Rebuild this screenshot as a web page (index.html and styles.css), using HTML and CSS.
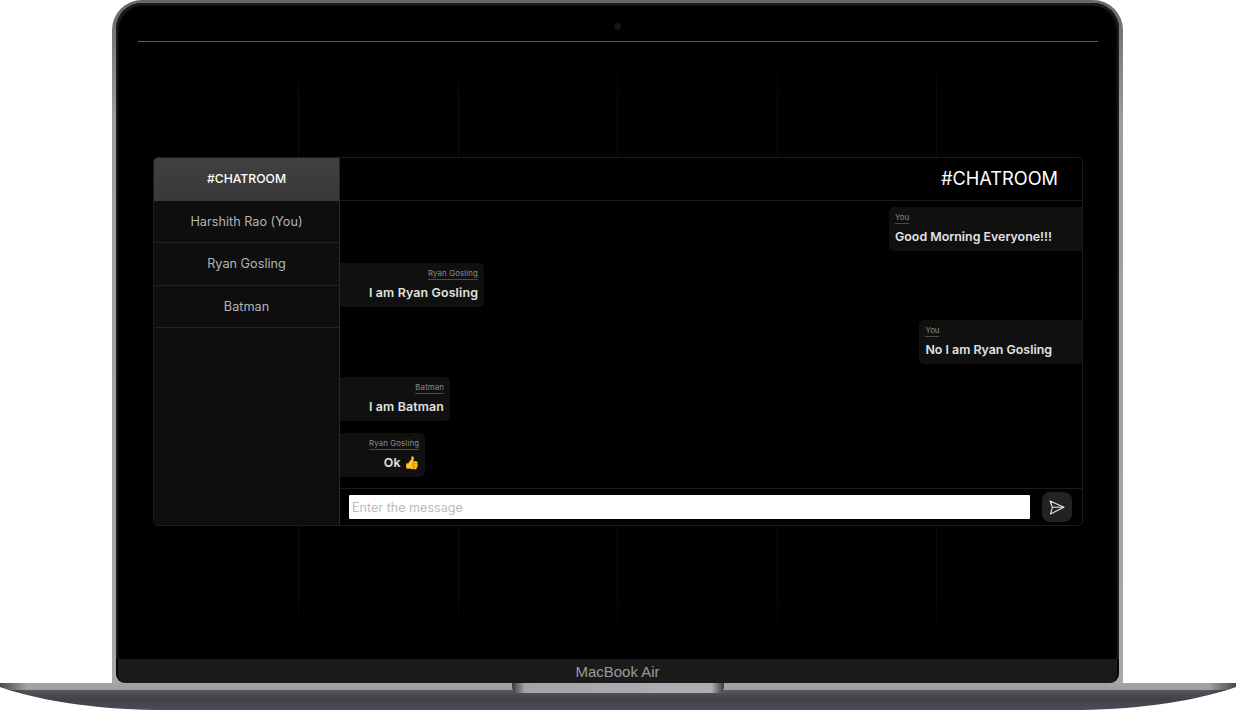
FILE: index.html
```html
<!DOCTYPE html>
<html lang="en">
<head>
    <meta charset="UTF-8">
    <meta name="viewport" content="width=device-width, initial-scale=1.0">
    <title>Chatroom</title>
    <link rel="stylesheet" href="styles.css">
</head>
<body>

<div class="laptop">
    <div class="lid">
        <div class="screen">
            <div class="grid-lines">
                <span></span><span></span><span></span><span></span><span></span>
            </div>
            <div class="camera"></div>
            <div class="top-line"></div>

            <div class="chat">
                <div class="sidebar">
                    <div class="room">#CHATROOM</div>
                    <div class="user">Harshith Rao (You)</div>
                    <div class="user">Ryan Gosling</div>
                    <div class="user">Batman</div>
                </div>
                <div class="main">
                    <div class="main-head">#CHATROOM</div>
                    <div class="messages">
                        <div class="msg mine">
                            <span class="sender">You</span>
                            <p>Good Morning Everyone!!!</p>
                        </div>
                        <div class="msg other">
                            <span class="sender">Ryan Gosling</span>
                            <p>I am Ryan Gosling</p>
                        </div>
                        <div class="msg mine">
                            <span class="sender">You</span>
                            <p>No I am Ryan Gosling</p>
                        </div>
                        <div class="msg other">
                            <span class="sender">Batman</span>
                            <p>I am Batman</p>
                        </div>
                        <div class="msg other">
                            <span class="sender">Ryan Gosling</span>
                            <p>Ok 👍</p>
                        </div>
                    </div>
                    <form class="send-bar">
                        <input type="text" placeholder="Enter the message">
                        <button type="button" aria-label="Send">
                            <svg width="16" height="15" viewBox="0 0 16 15" fill="none" stroke="#e4e4e4" stroke-width="1.1" stroke-linejoin="round">
                                <path d="M1 1 L15 7.2 L1.5 14 L3.4 7.2 Z"/>
                                <path d="M3.4 7.2 H15"/>
                            </svg>
                        </button>
                    </form>
                </div>
            </div>
        </div>
        <div class="model-bar">MacBook Air</div>
    </div>
    <div class="base">
        <svg class="base-shape" width="1236" height="27" viewBox="0 0 1236 27" preserveAspectRatio="none">
            <defs>
                <linearGradient id="baseFill" x1="0" y1="0" x2="0" y2="1">
                    <stop offset="0" stop-color="#a3a3a7"/>
                    <stop offset="0.24" stop-color="#a0a0a4"/>
                    <stop offset="0.28" stop-color="#55555c"/>
                    <stop offset="0.6" stop-color="#41414a"/>
                    <stop offset="1" stop-color="#4c4c56"/>
                </linearGradient>
                <linearGradient id="baseEdge" x1="0" y1="0" x2="1" y2="0">
                    <stop offset="0" stop-color="#000" stop-opacity="0.55"/>
                    <stop offset="0.022" stop-color="#000" stop-opacity="0"/>
                    <stop offset="0.978" stop-color="#000" stop-opacity="0"/>
                    <stop offset="1" stop-color="#000" stop-opacity="0.55"/>
                </linearGradient>
            </defs>
            <path d="M0 0 H1236 V4 C1190 20 1130 27 1070 27 H166 C106 27 46 20 0 4 Z" fill="url(#baseFill)"/>
            <path d="M0 0 H1236 V4 C1190 20 1130 27 1070 27 H166 C106 27 46 20 0 4 Z" fill="url(#baseEdge)"/>
        </svg>
        <div class="notch"></div>
    </div>
</div>

</body>
</html>
```

FILE: styles.css
```css
* {
    box-sizing: border-box;
    margin: 0;
    padding: 0;
    font-family: Inter, "Open Sans", sans-serif;
}
body {
    background: white;
    overflow: hidden;
}
.laptop {
    width: 1236px;
    height: 710px;
    display: flex;
    flex-direction: column;
    align-items: center;
}
.lid {
    width: 1011px;
    height: 683px;
    margin-right: 1px;
    padding: 3px 4px 0;
    display: flex;
    flex-direction: column;
    border-radius: 30px 30px 0 0;
    background: linear-gradient(#66666c, #9c9ca1 120px, #a8a8ac);
}
.screen {
    position: relative;
    flex: 1;
    background: black;
    border-radius: 26px 26px 0 0;
    box-shadow: inset 2px 2px 2px #1e1e22, inset -2px 2px 2px #1e1e22;
    padding-top: 38px;
}
.grid-lines {
    position: absolute;
    top: 47px;
    bottom: 17px;
    left: 182px;
    display: flex;
    gap: 158.5px;
}
.grid-lines span {
    width: 1px;
    background: linear-gradient(transparent, #0c0c0c 8%, #0c0c0c 92%, transparent);
}
.camera {
    position: absolute;
    top: 20px;
    left: 498px;
    width: 7px;
    height: 7px;
    border-radius: 50%;
    background: #151515;
}
.top-line {
    position: relative;
    height: 1px;
    margin: 0 21px 0 22px;
    background: #5e5e5e;
}
.chat {
    position: relative;
    display: flex;
    width: 930px;
    height: 369px;
    margin: 115px 0 0 37px;
    border: 1px solid #1d1d1d;
    border-radius: 5px;
    background: black;
    overflow: hidden;
}
.sidebar {
    width: 186px;
    background: #0e0e0e;
    border-right: 1px solid #262626;
}
.room {
    height: 43px;
    line-height: 42px;
    text-align: center;
    font-size: 12.2px;
    font-weight: 500;
    color: white;
    background: linear-gradient(#404040, #393939);
}
.user {
    height: 42.3px;
    line-height: 41.6px;
    text-align: center;
    font-size: 12.7px;
    color: #b4b4b4;
    border-bottom: 1px solid #222;
}
.main {
    flex: 1;
    display: flex;
    flex-direction: column;
}
.main-head {
    height: 43px;
    line-height: 41px;
    padding-right: 24px;
    text-align: right;
    font-size: 18.2px;
    font-weight: 400;
    color: white;
    border-bottom: 1px solid #1b1b1b;
}
.messages {
    flex: 1;
    display: flex;
    flex-direction: column;
    gap: 12.7px;
    padding-top: 5.7px;
}
.msg {
    height: 44px;
    background: #101010;
    display: flex;
    flex-direction: column;
}
.mine {
    align-self: flex-end;
    align-items: flex-start;
    padding: 5px 30px 5px 6px;
    border-radius: 5px 0 0 5px;
}
.other {
    align-self: flex-start;
    align-items: flex-end;
    padding: 5px 6px 5px 29px;
    border-radius: 0 5px 5px 0;
    letter-spacing: 0.15px;
}
.sender {
    font-size: 7.8px;
    line-height: 11px;
    color: #8c8c8c;
    border-bottom: 1px solid #4a4a4a;
}
.msg p {
    margin-top: 4px;
    font-size: 12.4px;
    line-height: 18px;
    font-weight: 600;
    color: #e2e2e2;
}
.send-bar {
    height: 37px;
    display: flex;
    align-items: center;
    gap: 12px;
    padding: 0 10px 0 9px;
    border-top: 1px solid #1b1b1b;
}
.send-bar input {
    flex: 1;
    height: 24px;
    padding: 0 3px;
    border: none;
    outline: none;
    border-radius: 1px;
    background: white;
    font-size: 12.6px;
}
.send-bar input::placeholder {
    color: #bcbcbc;
}
.send-bar button {
    width: 30px;
    height: 30px;
    display: flex;
    align-items: center;
    justify-content: center;
    border: none;
    border-radius: 8px;
    background: #222;
    cursor: pointer;
}
.model-bar {
    height: 24px;
    line-height: 26px;
    text-align: center;
    font-family: "Liberation Sans", sans-serif;
    font-size: 15px;
    color: #9a9a9a;
    background: #1a1a1a;
    border: solid #050505;
    border-width: 0 2px;
    border-radius: 0 0 9px 9px;
}
.base {
    position: relative;
    width: 1236px;
    height: 27px;
}
.base-shape {
    display: block;
}
.notch {
    position: absolute;
    top: 0;
    left: 512px;
    width: 212px;
    height: 10px;
    background: linear-gradient(90deg, #3a3a3e, #a4a4a8 6%, #b0b0b4 94%, #3a3a3e);
    border-radius: 0 0 6px 6px;
}
```
